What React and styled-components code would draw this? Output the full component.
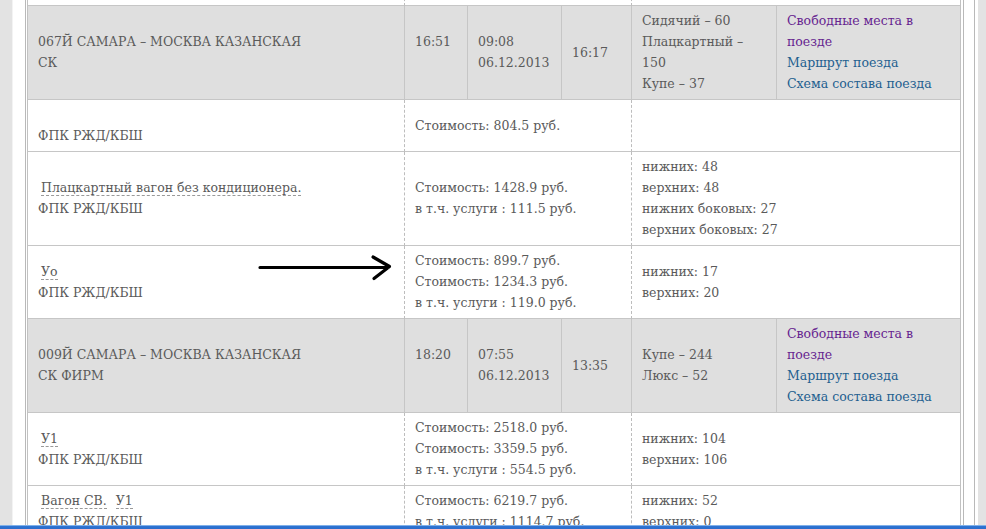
import React from "react";
import styled, { createGlobalStyle } from "styled-components";

const GlobalStyle = createGlobalStyle`
  html, body {
    margin: 0;
    padding: 0;
    height: 100%;
    overflow: hidden;
    background: #e3e3e3;
  }
  body {
    font-family: "DejaVu Serif", "Liberation Serif", serif;
  }
`;

const Viewport = styled.div`
  height: 529px;
  overflow: hidden;
  display: flex;
`;

const Sheet = styled.div`
  margin-left: 12px;
  width: 966px;
  box-sizing: border-box;
  background: #fff;
  border-left: 1px solid #f3f3f3;
  padding: 0 5px 0 12px;
  display: flex;
`;

const Shell = styled.div`
  flex: 1;
  border-left: 1px solid #b9b9b9;
  border-right: 1px solid #b9b9b9;
  padding: 0 10px 0 1px;
`;

const Frame = styled.div`
  display: flow-root;
  position: relative;
  border-right: 1px solid #b9b9b9;
  padding-right: 2px;
  height: 100%;
`;

const Table = styled.table`
  margin-top: -46px;
  width: 932px;
  table-layout: fixed;
  border-collapse: separate;
  border-spacing: 0;
  border-left: 1px solid #c2c2c2;
  border-right: 1px solid #c2c2c2;
  font-size: 12.5px;
  line-height: 21px;
  color: #5a5a5a;
`;

const Row = styled.tr`
  background: ${({ $head }) => ($head ? "#dfdfdf" : "#fff")};
`;

const Cell = styled.td`
  padding: 4px 10px 5px;
  vertical-align: middle;
  white-space: nowrap;
  border-bottom: 1px solid #c6c6c6;
  border-left: ${({ $first, $dashed }) =>
    $first ? "none" : $dashed ? "1px dashed #bdbdbd" : "1px solid #c6c6c6"};
`;

const Line = styled.div`
  min-height: 21px;
`;

const Hint = styled.span`
  margin-left: ${({ $gap }) => $gap || 3}px;
  border-bottom: 1px dashed #999;
`;

const Link = styled.a`
  display: block;
  text-decoration: none;
  color: ${({ $visited }) => ($visited ? "#66248f" : "#23608f")};
`;

const Arrow = styled.svg`
  position: absolute;
  left: 203px;
  top: 254px;
  pointer-events: none;
`;

const Taskbar = styled.div`
  position: fixed;
  left: 0;
  right: 0;
  bottom: 0;
  height: 4px;
  background: linear-gradient(#7fb0ea 0, #7fb0ea 1px, #2f74d2 1px, #2a6dcc 100%);
`;

const trains = [
  {
    name: ["067Й САМАРА  – МОСКВА КАЗАНСКАЯ", "СК"],
    dep: "16:51",
    arr: ["09:08", "06.12.2013"],
    way: "16:17",
    seats: ["Сидячий – 60", "Плацкартный –", "150", "Купе – 37"],
    cars: [
      { kind: null, price: ["Стоимость: 804.5 руб."], places: [] },
      {
        kind: ["Плацкартный вагон без кондиционера."],
        price: ["Стоимость: 1428.9 руб.", "в т.ч. услуги : 111.5 руб."],
        places: ["нижних: 48", "верхних: 48", "нижних боковых: 27", "верхних боковых: 27"],
      },
      {
        kind: ["Уо"],
        price: ["Стоимость: 899.7 руб.", "Стоимость: 1234.3 руб.", "в т.ч. услуги : 119.0 руб."],
        places: ["нижних: 17", "верхних: 20"],
      },
    ],
  },
  {
    name: ["009Й САМАРА  – МОСКВА КАЗАНСКАЯ", "СК ФИРМ"],
    dep: "18:20",
    arr: ["07:55", "06.12.2013"],
    way: "13:35",
    seats: ["Купе – 244", "Люкс – 52"],
    cars: [
      {
        kind: ["У1"],
        price: ["Стоимость: 2518.0 руб.", "Стоимость: 3359.5 руб.", "в т.ч. услуги : 554.5 руб."],
        places: ["нижних: 104", "верхних: 106"],
      },
      {
        kind: ["Вагон СВ.", "У1"],
        price: ["Стоимость: 6219.7 руб.", "в т.ч. услуги : 1114.7 руб."],
        places: ["нижних: 52", "верхних: 0"],
      },
    ],
  },
];

function Lines({ items }) {
  return items.map((t, i) => <Line key={i}>{t}</Line>);
}

function CarRow({ car, blank }) {
  return (
    <Row>
      <Cell $first>
        <Line>
          {car.kind &&
            car.kind.map((k, i) => (
              <Hint key={i} $gap={i ? 9 : 3}>
                {k}
              </Hint>
            ))}
        </Line>
        <Line>{blank ? "" : "ФПК РЖД/КБШ"}</Line>
      </Cell>
      <Cell colSpan={3} $dashed>
        <Lines items={car.price} />
      </Cell>
      <Cell colSpan={2} $dashed>
        <Lines items={car.places} />
      </Cell>
    </Row>
  );
}

function TrainRow({ train }) {
  return (
    <Row $head>
      <Cell $first>
        <Lines items={train.name} />
      </Cell>
      <Cell>
        <Line>{train.dep}</Line>
        <Line />
      </Cell>
      <Cell>
        <Lines items={train.arr} />
      </Cell>
      <Cell>{train.way}</Cell>
      <Cell>
        <Lines items={train.seats} />
      </Cell>
      <Cell>
        <Link href="#" $visited>
          Свободные места в
          <br />
          поезде
        </Link>
        <Link href="#">Маршрут поезда</Link>
        <Link href="#">Схема состава поезда</Link>
      </Cell>
    </Row>
  );
}

export default function App() {
  return (
    <>
      <GlobalStyle />
      <Viewport>
        <Sheet>
          <Shell>
            <Frame>
              <Table>
                <colgroup>
                  <col style={{ width: 376 }} />
                  <col style={{ width: 63 }} />
                  <col style={{ width: 94 }} />
                  <col style={{ width: 70 }} />
                  <col style={{ width: 145 }} />
                  <col style={{ width: 184 }} />
                </colgroup>
                <tbody>
                  <CarRow blank car={{ kind: null, price: [""], places: [""] }} />
                  {trains.map((t, i) => (
                    <React.Fragment key={i}>
                      <TrainRow train={t} />
                      {t.cars.map((c, j) => (
                        <CarRow key={j} car={c} />
                      ))}
                    </React.Fragment>
                  ))}
                </tbody>
              </Table>
              <Arrow width="170" height="30" viewBox="0 0 170 30">
                <path
                  d="M30 13.5 L158 13.5 M143 3 L159.5 12.5 L144 24.5"
                  fill="none"
                  stroke="#000"
                  strokeWidth="3.2"
                  strokeLinecap="round"
                  strokeLinejoin="round"
                />
              </Arrow>
            </Frame>
          </Shell>
        </Sheet>
      </Viewport>
      <Taskbar />
    </>
  );
}
